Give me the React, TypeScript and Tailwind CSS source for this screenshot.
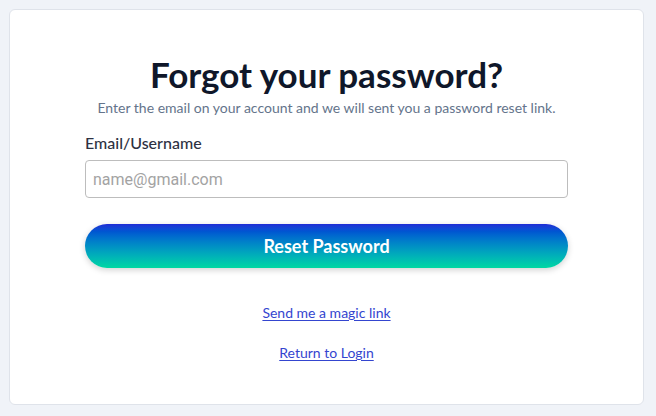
export default function App() {
  return (
    <div
      className="min-h-screen w-full bg-[#f0f3f8] p-[9px] pr-[12px]"
      style={{ fontFamily: "Lato, 'Noto Sans', sans-serif" }}
    >
      <div className="h-[396px] rounded-md border border-[#dfe3ea] bg-white px-[75px] pt-[44px]">
        <h1 className="text-center text-[35px] font-bold leading-[40px] text-[#0f172a]">
          Forgot your password?
        </h1>
        <p className="mt-[4px] text-center text-[14px] leading-[20px] text-[#64748b]">
          Enter the email on your account and we will sent you a password reset link.
        </p>
        <label className="mt-[13px] block text-[16px] font-medium leading-[24px] text-[#2d3142]">
          Email/Username
        </label>
        <input
          type="text"
          placeholder="name@gmail.com"
          className="mt-[5px] block h-[38px] w-full rounded border border-[#bdbdbd] px-[7px] text-[16px] outline-none placeholder:text-[#a3a3a3]"
          style={{ fontFamily: "Roboto, sans-serif" }}
        />
        <button className="mt-[26px] flex h-[44px] w-full items-center justify-center rounded-full bg-gradient-to-b from-[#1f2bd6] to-[#04d8a2] text-[18px] font-bold text-white shadow-[0_2px_6px_rgba(0,0,0,0.18)]">
          Reset Password
        </button>
        <div className="mt-[35px] flex flex-col items-center gap-[20px] text-[14px] leading-[20px] text-[#3445cf]">
          <a href="#" className="underline underline-offset-2">Send me a magic link</a>
          <a href="#" className="underline underline-offset-2">Return to Login</a>
        </div>
      </div>
    </div>
  );
}
